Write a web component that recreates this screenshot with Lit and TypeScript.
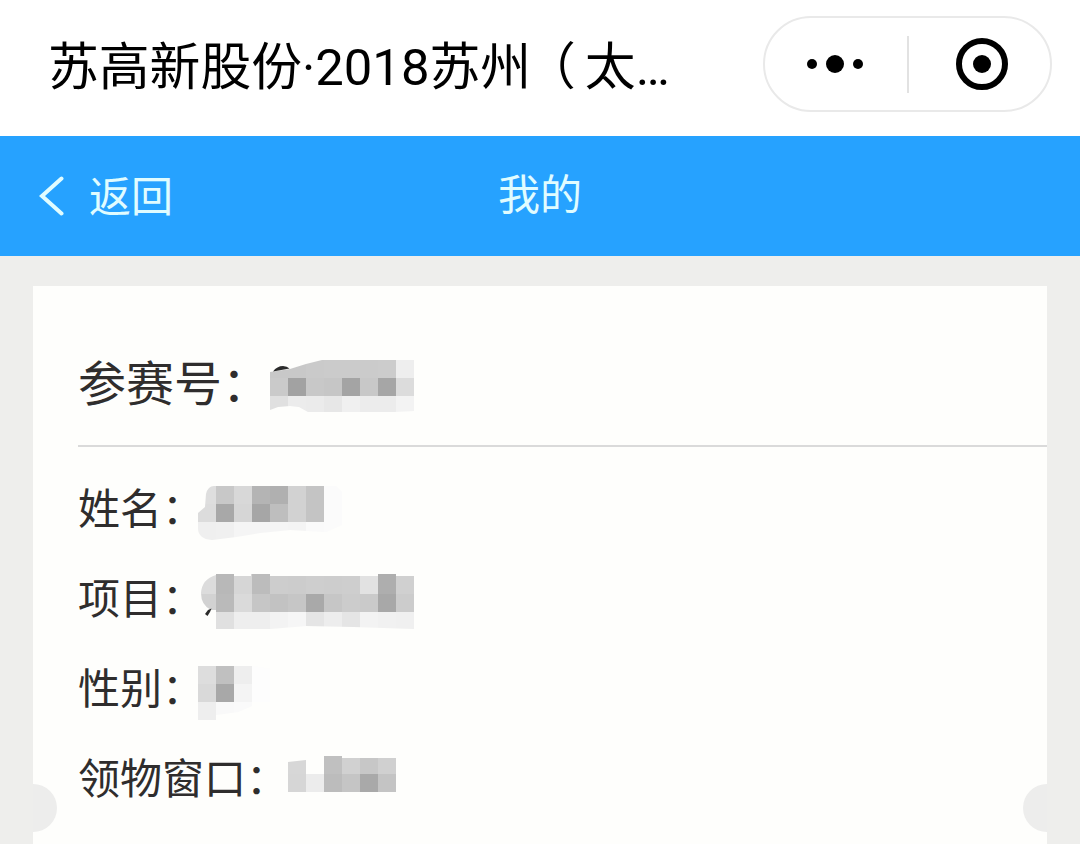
import { LitElement, html, svg, css } from 'lit';
import { customElement, property } from 'lit/decorators.js';

interface Mosaic {
  // grey level of each 18px block, row by row, '' is an empty block
  rows: string[][];
  outline: string;
  marks?: string;
}

interface Field {
  label: string;
  mosaic: Mosaic;
}

const BLOCK = 18;

const NUMBER_FIELD: Field = {
  label: '参赛号：',
  mosaic: {
    rows: [
      ['c8', 'c8', 'ca', 'cb', 'cb', 'cb', 'cc', 'ee'],
      ['ca', 'a2', 'c8', 'c6', 'a4', 'c8', 'a6', 'dc'],
      ['e0', 'ec', 'eb', 'e7', 'f0', 'ec', 'ec', 'f3'],
    ],
    outline: 'M0 12 L20 9 L36 4 L52 0 H144 V51 L124 52 H38 L29 47 L20 46 L8 47 L0 50 Z',
    marks: 'M3 11.5 Q7 6 13 6 Q17 6 19.500 8.500 Z',
  },
};

const FIELDS: Field[] = [
  {
    label: '姓名：',
    mosaic: {
      rows: [
        ['de', 'c8', 'd8', 'b4', 'b0', 'd2', 'c4', 'fb'],
        ['dc', 'a8', 'd6', 'a6', 'be', 'd2', 'c4', 'fb'],
        ['ef', 'f0', 'f5', 'f5', 'f5', 'f4', 'fa', 'fb'],
      ],
      outline: 'M0 27 L7 21 L8 8 Q10 0 16 0 H138 L146 8 V38 L128 46 L92 44 L62 47 L38 51 L14 54 Q0 53 0 42 Z',
    },
  },
  {
    label: '项目：',
    mosaic: {
      rows: [
        ['dc', 'b8', 'd6', 'bc', 'cd', 'cc', 'ce', 'cd', 'ce', 'e2', 'ae', 'd0'],
        ['d2', 'ba', 'da', 'c6', 'c2', 'c6', 'a9', 'c6', 'cc', 'ca', 'a8', 'cc'],
        ['', 'e0', 'ee', 'ee', 'f3', 'f6', 'e5', 'ed', 'e5', 'f3', 'f1', 'f0'],
      ],
      outline: 'M18 -2 H36 V0 H53 V-2 H72 V0 H180 V-2 H198 V0 H216 V53 L156 51 L108 50 L72 53 H18 V34 H13 Q3 29 3 17 Q4 3 18 -1 Z',
      marks: 'M7 38 L10 34 L13.500 32.500 L12 36 L9.500 40 Z',
    },
  },
  {
    label: '性别：',
    mosaic: {
      rows: [
        ['dd', 'c0', 'ee', 'fd'],
        ['d9', 'a8', 'f4', 'fd'],
        ['ee', 'f9', 'fa', ''],
      ],
      outline: 'M0 0 H54 L90 6 V40 H54 L40 46 L18 49 V54 H0 Z',
    },
  },
  {
    label: '领物窗口：',
    mosaic: {
      rows: [
        ['d7', '', 'c0', 'd1', 'c7', 'd0'],
        ['d6', 'ec', 'bc', 'c5', 'a9', 'c4'],
      ],
      outline: 'M0 6 L18 4 H36 V0 H54 V2 H108 V36 H0 Z',
    },
  },
];

@customElement('mosaic-value')
export class MosaicValue extends LitElement {
  @property({ attribute: false })
  mosaic!: Mosaic;

  static styles = css`
    :host {
      display: block;
    }

    svg {
      display: block;
      overflow: visible;
    }

    .blocks {
      filter: blur(0.5px);
    }

    .mark {
      fill: #2b2b2b;
    }
  `;

  render() {
    const { rows, outline, marks } = this.mosaic;
    const width = rows[0].length * BLOCK;
    return html`
      <svg width=${width} height="54" viewBox="0 0 ${width} 54">
        <clipPath id="outline"><path d=${outline} /></clipPath>
        <g class="blocks" clip-path="url(#outline)" shape-rendering="crispEdges">
          ${rows.map((row, y) =>
            row.map((tone, x) =>
              tone
                ? svg`<rect
                    x=${x * BLOCK}
                    y=${y === 0 ? -4 : y * BLOCK}
                    width=${BLOCK}
                    height=${y === 0 ? BLOCK + 4 : BLOCK}
                    fill="#${tone}${tone}${tone}" />`
                : null
            )
          )}
        </g>
        ${marks ? svg`<path class="mark" d=${marks} />` : null}
      </svg>
    `;
  }
}

@customElement('app-root')
export class AppRoot extends LitElement {
  static styles = css`
    :host {
      display: flex;
      flex-direction: column;
      height: 844px;
      overflow: hidden;
      background: #eeeeec;
      color: #2f2d2d;
      font-family: Roboto, 'Noto Sans CJK SC', sans-serif;
    }

    .titlebar {
      display: flex;
      align-items: center;
      justify-content: space-between;
      box-sizing: border-box;
      height: 136px;
      padding: 0 28px 8px 48px;
      background: #fff;
    }

    .title {
      margin: 0;
      padding-top: 7px;
      color: #000;
      font-size: 50.8px;
      font-weight: 400;
      line-height: 72px;
      white-space: nowrap;
    }

    .paren {
      margin: 0 9px 0 19.4px;
      font-feature-settings: 'halt';
    }

    .capsule {
      display: grid;
      grid-template-columns: 1fr 2px 1fr;
      align-items: center;
      justify-items: center;
      box-sizing: border-box;
      width: 289px;
      height: 96px;
      border: 2px solid #e9e9e9;
      border-radius: 48px;
    }

    .capsule svg {
      display: block;
    }

    .dots {
      margin-right: 2px;
    }

    .target {
      margin-left: 5px;
    }

    .separator {
      width: 2px;
      height: 57px;
      background: #e2e2e2;
    }

    .navbar {
      display: grid;
      grid-template-columns: 1fr auto 1fr;
      align-items: center;
      box-sizing: border-box;
      height: 120px;
      padding: 0 39px;
      background: #26a2ff;
      color: #e0fcff;
      font-size: 42px;
      line-height: 60px;
    }

    .back {
      display: flex;
      align-items: center;
      gap: 24px;
    }

    .back span {
      padding-top: 3px;
    }

    .heading {
      padding-bottom: 1px;
    }

    .card {
      position: relative;
      flex: 1;
      margin: 30px 33px 0;
      padding-left: 45px;
      background: #fefefc;
    }

    .notch {
      position: absolute;
      top: 498px;
      width: 24px;
      height: 48px;
      background: #ededec;
    }

    .notch.left {
      left: 0;
      border-radius: 0 24px 24px 0;
    }

    .notch.right {
      right: 0;
      border-radius: 24px 0 0 24px;
    }

    .number {
      display: flex;
      box-sizing: border-box;
      height: 161px;
      padding-top: 64px;
      border-bottom: 2px solid #dadada;
      font-size: 48px;
      line-height: 70px;
    }

    .number mosaic-value {
      padding-top: 10px;
    }

    .fields {
      padding-top: 18px;
    }

    .field {
      display: flex;
      height: 90px;
      font-size: 42px;
      line-height: 90px;
    }

    .field mosaic-value {
      padding-top: 21px;
    }

    .field.short mosaic-value {
      margin-left: -6px;
    }
  `;

  render() {
    return html`
      <header class="titlebar">
        <h1 class="title">苏高新股份·2018苏州<span class="paren">（</span>太…</h1>
        <div class="capsule">
          <svg class="dots" width="58" height="20" viewBox="0 0 58 20">
            <circle cx="6" cy="10" r="5" />
            <circle cx="29" cy="10" r="9" />
            <circle cx="52" cy="10" r="5" />
          </svg>
          <span class="separator"></span>
          <svg class="target" width="52" height="52" viewBox="0 0 52 52">
            <circle cx="26" cy="26" r="23" fill="none" stroke="#000" stroke-width="6" />
            <circle cx="26" cy="26" r="9" />
          </svg>
        </div>
      </header>
      <nav class="navbar">
        <div class="back">
          <svg width="26" height="40" viewBox="0 0 26 40" fill="none" stroke="currentColor" stroke-width="4" stroke-linecap="round">
            <path d="M22.500 2.500 L3 20 L22.500 37.500" />
          </svg>
          <span>返回</span>
        </div>
        <div class="heading">我的</div>
      </nav>
      <main class="card">
        <div class="number">
          <span>${NUMBER_FIELD.label}</span>
          <mosaic-value .mosaic=${NUMBER_FIELD.mosaic}></mosaic-value>
        </div>
        <div class="fields">
          ${FIELDS.map(
            (field) => html`
              <div class="field ${field.label.length === 3 ? 'short' : ''}">
                <span>${field.label}</span>
                <mosaic-value .mosaic=${field.mosaic}></mosaic-value>
              </div>
            `
          )}
        </div>
        <span class="notch left"></span>
        <span class="notch right"></span>
      </main>
    `;
  }
}

declare global {
  interface HTMLElementTagNameMap {
    'app-root': AppRoot;
    'mosaic-value': MosaicValue;
  }
}
